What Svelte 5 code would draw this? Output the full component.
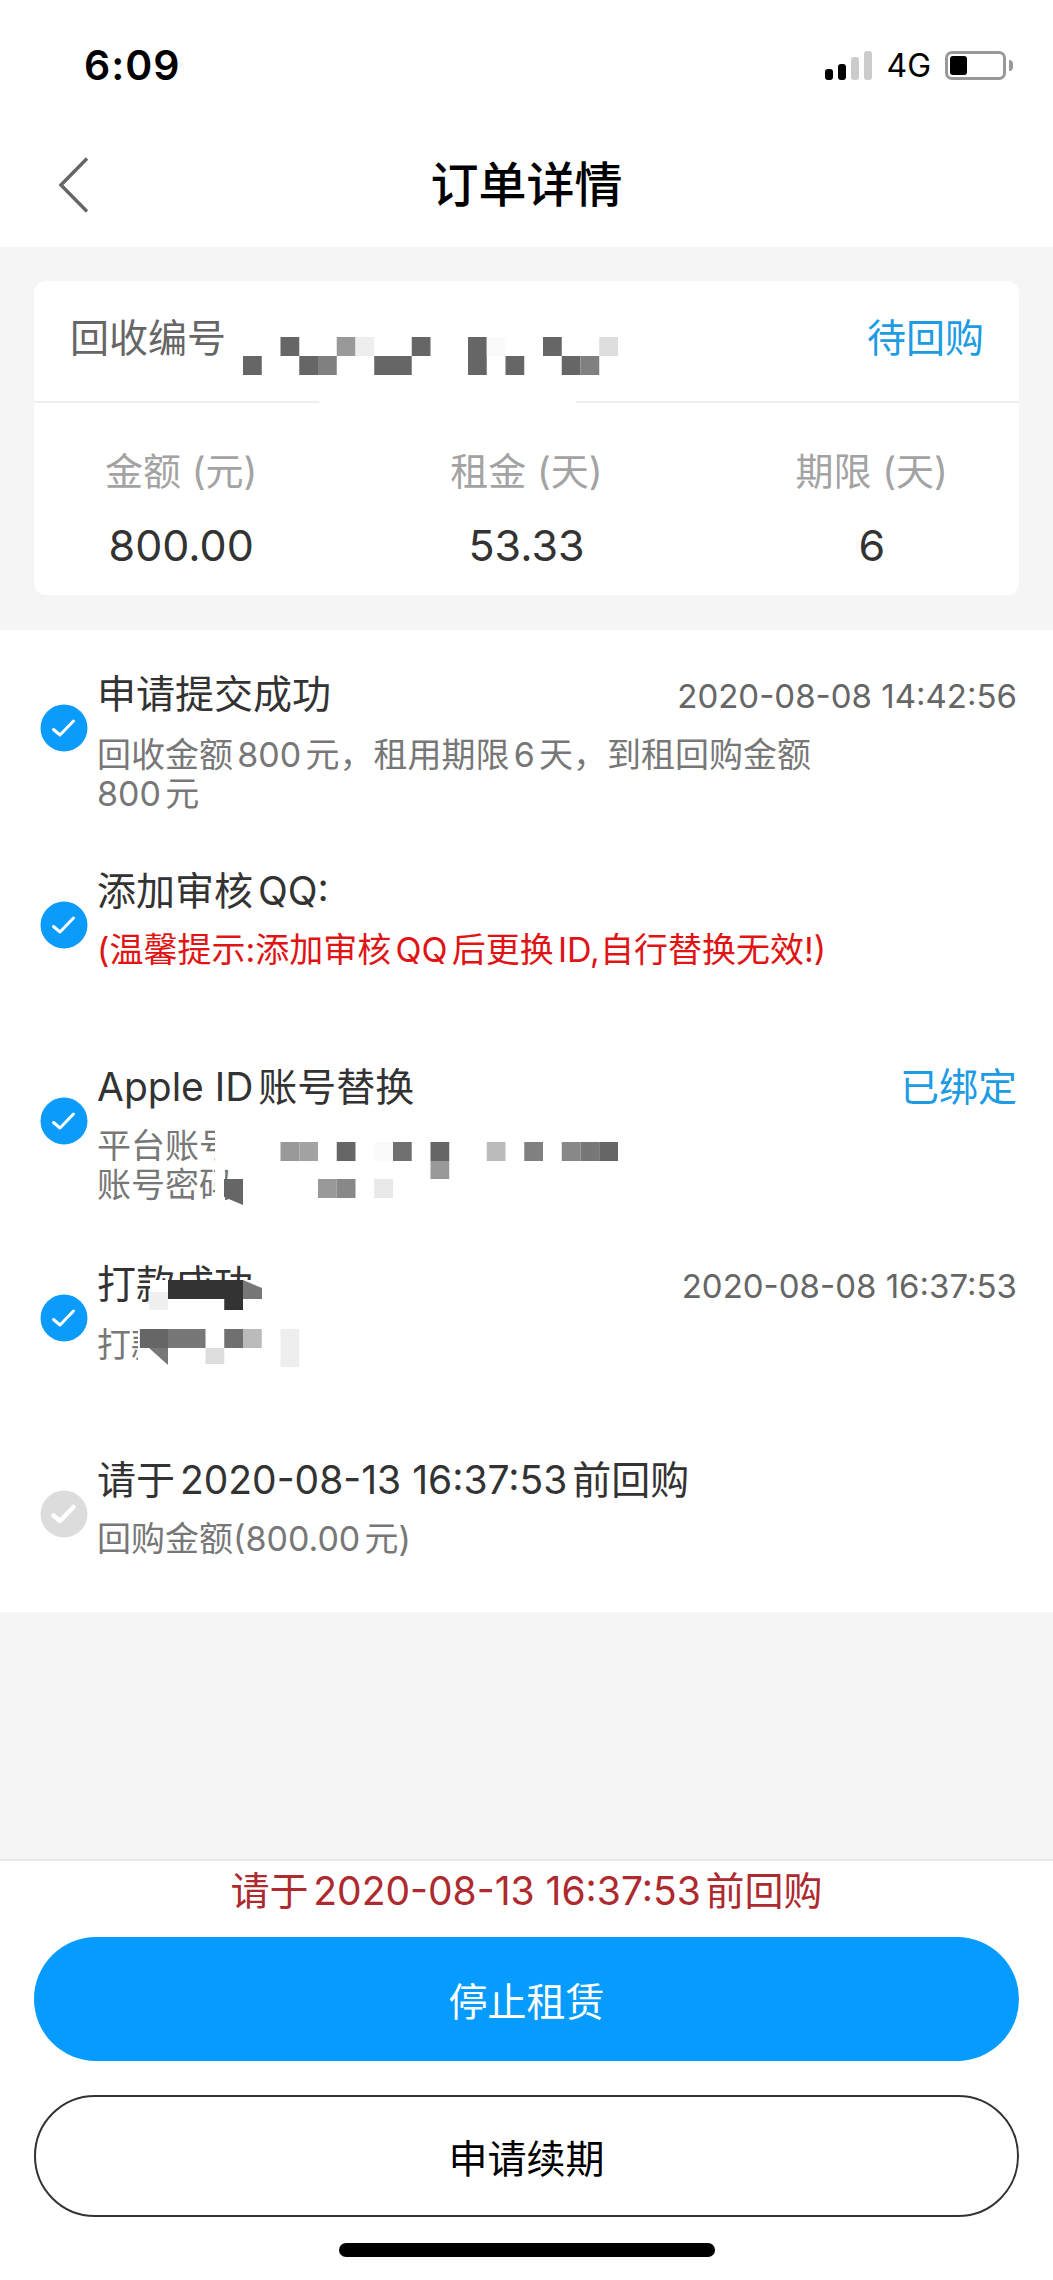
<script>
  const stats = [
    { label: '金额 (元)', value: '800.00' },
    { label: '租金 (天)', value: '53.33' },
    { label: '期限 (天)', value: '6' }
  ];

  const steps = [
    { title: '申请提交成功', side: '2020-08-08 14:42:56', lines: ['回收金额800元，租用期限6天，到租回购金额800元'] },
    { title: '添加审核QQ:', note: '(温馨提示:添加审核QQ后更换ID,自行替换无效!)' },
    { title: 'Apple ID账号替换', status: '已绑定', lines: ['平台账号', '账号密码'] },
    { title: '打款成功', side: '2020-08-08 16:37:53', lines: ['打款'] },
    { title: '请于2020-08-13 16:37:53前回购', lines: ['回购金额(800.00元)'], pending: true }
  ];

  // redacted bits of the screenshot: column, top, span, height, colour
  const col = (n) => 243 + n * 18.75;
  const masks = [
    [319, 400, 257, 6],
    [215, 1130, 30, 34],
    [215, 1168, 10, 34],
    [150, 1280, 112, 26],
    [138, 1325, 170, 44]
  ];
  const cells = [
    [2, 337, 1, 19, '#666'], [5, 337, 1, 19, '#999'], [6, 337, 1, 19, '#eee'], [9, 337, 1, 19, '#666'],
    [12, 337, 1, 19, '#666'], [13, 337, 1, 19, '#fafafa'], [16, 337, 1, 19, '#666'], [19, 337, 1, 19, '#ddd'],
    [0, 356, 1, 19, '#666'], [3, 356, 1, 19, '#666'], [4, 356, 1, 19, '#808080'], [7, 356, 2, 19, '#666'],
    [12, 356, 1, 19, '#666'], [14, 356, 1, 19, '#666'], [17, 356, 1, 19, '#666'], [18, 356, 1, 19, '#808080'],

    [2, 1142, 1, 19, '#999'], [3, 1142, 1, 19, '#a3a3a3'], [5, 1142, 1, 19, '#666'], [7, 1142, 1, 19, '#fafafa'],
    [8, 1142, 1, 19, '#707070'], [10, 1142, 1, 19, '#666'], [13, 1142, 1, 19, '#bbb'], [15, 1142, 1, 19, '#808080'],
    [17, 1142, 1, 19, '#888'], [18, 1142, 1, 19, '#777'], [19, 1142, 1, 19, '#666'], [10, 1161, 1, 18, '#999'],
    [4, 1179, 1, 19, '#999'], [5, 1179, 1, 19, '#888'], [7, 1179, 1, 19, '#e8e8e8'],

    [-4, 1280, 4, 19, '#333'], [-1, 1299, 1, 11, '#333'], [-5, 1292, 1, 18, '#f0f0f0'],

    [-5.5, 1329, 1.5, 19, '#666'], [-4, 1329, 2, 19, '#777'], [-1, 1329, 1, 19, '#707070'], [0, 1329, 1, 19, '#bbb'],
    [2, 1329, 1, 38, '#eee'], [-2, 1348, 1, 16, '#ddd']
  ];
  const shards = [
    ['224,1179 243,1179 243,1205 224,1197', '#666'],
    ['243,1280 262,1288 262,1299 243,1299', '#777'],
    ['149,1348 168,1348 168,1365', '#777']
  ];
</script>

<div class="page">
  <div class="statusbar">
    <span class="time">6:09</span>
    <div class="indicators">
      <div class="signal">
        <i class="on b1"></i>
        <i class="on b2"></i>
        <i class="b3"></i>
        <i class="b4"></i>
      </div>
      <span class="net">4G</span>
      <div class="battery"><b></b></div>
      <div class="nub"></div>
    </div>
  </div>

  <header class="nav">
    <svg class="back" width="30" height="56" viewBox="0 0 30 56">
      <path d="M28 1.5 L2 28 L28 54.5" fill="none" stroke="#666" stroke-width="3.4" />
    </svg>
    <h1>订单详情</h1>
  </header>

  <main class="content">
    <section class="summary">
      <div class="card">
        <div class="card-head">
          <span class="label">回收编号</span>
          <span class="link">待回购</span>
        </div>
        <div class="stats">
          {#each stats as s}
            <div class="stat">
              <span class="stat-label">{s.label}</span>
              <span class="stat-value">{s.value}</span>
            </div>
          {/each}
        </div>
      </div>
    </section>

    <section class="steps">
      {#each steps as step}
        <div class="step">
          <svg class="tick" width="48" height="48" viewBox="0 0 48 48">
            <circle cx="24" cy="24" r="23.5" fill={step.pending ? '#dcdcdc' : '#0a9bfb'} />
            <path
              d="M13.5 25.5 L20 31 L33.5 17"
              fill="none"
              stroke="#fff"
              stroke-width={step.pending ? 4.5 : 3}
              stroke-linecap="round"
              stroke-linejoin="round"
            />
          </svg>
          <div class="step-body">
            <div class="step-title">
              <span>{step.title}</span>
              {#if step.side}<span class="when">{step.side}</span>{/if}
              {#if step.status}<span class="link">{step.status}</span>{/if}
            </div>
            {#if step.note}<p class="note">{step.note}</p>{/if}
            {#if step.lines}
              <div class="lines">
                {#each step.lines as line}<p>{line}</p>{/each}
              </div>
            {/if}
          </div>
        </div>
      {/each}
    </section>
  </main>

  <footer class="actions">
    <p class="deadline">请于2020-08-13 16:37:53前回购</p>
    <button class="btn primary">停止租赁</button>
    <button class="btn outline">申请续期</button>
    <div class="home"></div>
  </footer>

  <!-- pixelated redaction that sits on top of the text -->
  <svg class="redact" width="1053" height="2280" viewBox="0 0 1053 2280">
    {#each masks as m}
      <rect x={m[0]} y={m[1]} width={m[2]} height={m[3]} fill="#fff" />
    {/each}
    {#each cells as c}
      <rect x={col(c[0])} y={c[1]} width={c[2] * 18.75} height={c[3]} fill={c[4]} />
    {/each}
    {#each shards as s}
      <polygon points={s[0]} fill={s[1]} />
    {/each}
  </svg>
</div>

<style>
  :global(body) {
    margin: 0;
    background: #fff;
  }

  .page {
    position: relative;
    width: 1053px;
    height: 2280px;
    display: flex;
    flex-direction: column;
    overflow: hidden;
    background: #fff;
    font-family: Inter, 'Noto Sans CJK SC', sans-serif;
    text-autospace: normal;
    color: #333;
  }

  p {
    margin: 0;
  }

  .statusbar {
    height: 130px;
    flex: none;
    display: flex;
    align-items: center;
    justify-content: space-between;
    padding: 0 40px 0 84px;
    box-sizing: border-box;
  }

  .time {
    font-size: 41px;
    font-weight: 600;
    letter-spacing: 1px;
    color: #000;
  }

  .indicators {
    display: flex;
    align-items: center;
  }

  .signal {
    display: flex;
    align-items: flex-end;
    gap: 5px;
    height: 29px;
    margin-right: 14px;
  }

  .signal i {
    display: block;
    width: 8px;
    border-radius: 3px;
    background: #ccc;
  }

  .signal i.on {
    background: #000;
  }

  .b1 { height: 11px; }
  .b2 { height: 16px; }
  .b3 { height: 23px; }
  .b4 { height: 29px; }

  .net {
    font-size: 32px;
    color: #000;
    margin-right: 14px;
  }

  .battery {
    width: 61px;
    height: 29px;
    box-sizing: border-box;
    border: 3px solid #999;
    border-radius: 7px;
    padding: 2px;
    display: flex;
  }

  .battery b {
    width: 17px;
    background: #000;
    border-radius: 3px;
  }

  .nub {
    width: 4px;
    height: 11px;
    margin-left: 3px;
    background: #999;
    border-radius: 0 4px 4px 0;
  }

  .nav {
    height: 117px;
    flex: none;
    position: relative;
    display: flex;
    justify-content: center;
    padding-top: 26px;
    box-sizing: border-box;
  }

  .back {
    position: absolute;
    left: 59px;
    top: 27px;
  }

  h1 {
    margin: 0;
    font-size: 48px;
    line-height: 58px;
    font-weight: 500;
    color: #000;
  }

  .content {
    flex: 1;
    background: #f5f5f5;
  }

  .summary {
    padding: 34px 34px 35px;
  }

  .card {
    height: 314px;
    background: #fff;
    border-radius: 12px;
  }

  .card-head {
    height: 122px;
    box-sizing: border-box;
    padding: 0 35px 0 36px;
    border-bottom: 2px solid #eee;
    display: flex;
    align-items: center;
    justify-content: space-between;
    font-size: 39px;
    line-height: 50px;
    padding-bottom: 6px;
  }

  .label {
    color: #666;
  }

  .link {
    color: #1d9be3;
    font-size: 39px;
  }

  .stats {
    display: flex;
    justify-content: space-between;
    padding: 0 71px;
    margin-top: 46px;
  }

  .stat {
    display: flex;
    flex-direction: column;
    align-items: center;
  }

  .stat-label {
    font-size: 38px;
    line-height: 44px;
    color: #a3a3a3;
  }

  .stat-value {
    margin-top: 28px;
    font-size: 43px;
    line-height: 48px;
    color: #333;
  }

  .steps {
    background: #fff;
    height: 982px;
    padding: 0 36px 0 40px;
  }

  .step {
    height: 196.5px;
    box-sizing: border-box;
    padding-top: 39px;
    display: flex;
    gap: 9px;
  }

  .tick {
    flex: none;
    margin-top: 35px;
  }

  .step-body {
    flex: 1;
    min-width: 0;
  }

  .step-title {
    display: flex;
    justify-content: space-between;
    align-items: baseline;
    font-size: 39px;
    line-height: 50px;
    color: #333;
  }

  .when {
    font-size: 33px;
    color: #666;
  }

  .lines {
    margin-top: 14px;
    max-width: 725px;
    font-size: 34px;
    line-height: 39px;
    color: #777;
  }

  .note {
    margin-top: 14px;
    font-size: 34px;
    line-height: 39px;
    color: #e01414;
  }

  .actions {
    flex: none;
    height: 421px;
    box-sizing: border-box;
    border-top: 2px solid #e8e8e8;
    background: #fff;
    display: flex;
    flex-direction: column;
    align-items: center;
    padding: 5px 34px 0;
  }

  .deadline {
    font-size: 39px;
    line-height: 50px;
    color: #ad2a2f;
  }

  .btn {
    display: block;
    width: 100%;
    box-sizing: border-box;
    border-radius: 62px;
    font-family: inherit;
    font-size: 39px;
    padding: 0;
  }

  .primary {
    height: 124px;
    margin-top: 21px;
    border: none;
    background: #069bff;
    color: #fff;
  }

  .outline {
    height: 122px;
    margin-top: 34px;
    border: 2px solid #333;
    background: #fff;
    color: #000;
  }

  .home {
    width: 376px;
    height: 14px;
    margin-top: 26px;
    border-radius: 7px;
    background: #000;
  }

  .redact {
    position: absolute;
    left: 0;
    top: 0;
    pointer-events: none;
  }
</style>
